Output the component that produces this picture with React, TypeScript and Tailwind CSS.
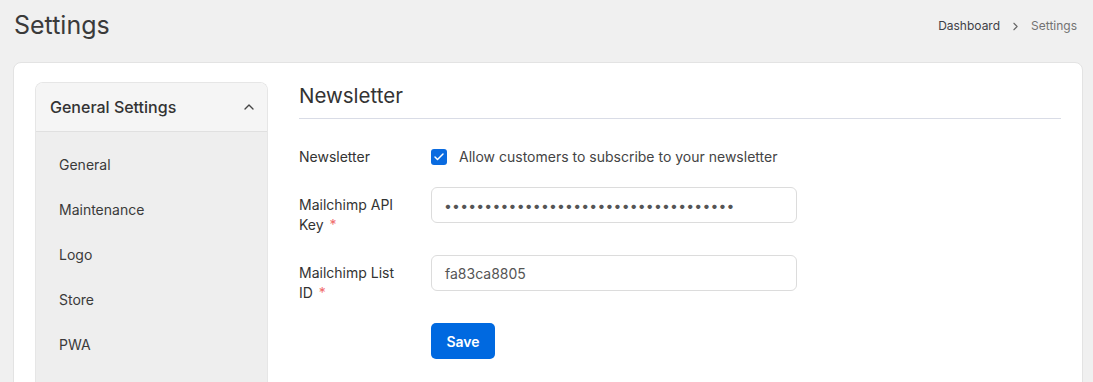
import { ChevronUp, ChevronRight, Check } from 'lucide-react';

const menuItems = ['General', 'Maintenance', 'Logo', 'Store', 'PWA'];

export default function App() {
  return (
    <div className="min-h-screen bg-[#f0f0f0] font-['Inter',sans-serif] text-[#333]">
      {/* Page header */}
      <div className="flex justify-between items-start pl-[14px] pr-[16px] pt-[9px] h-[62px]">
        <h1 className="text-[25px] leading-[32px] text-[#3a3a3a]">Settings</h1>
        <nav className="flex items-center gap-[9px] text-[12px] mt-[8px]">
          <span className="text-[#3f3f46]">Dashboard</span>
          <ChevronRight className="w-[13px] h-[13px] text-[#666]" strokeWidth={2} />
          <span className="text-[#737373]">Settings</span>
        </nav>
      </div>

      {/* Card */}
      <div className="mr-[10px] ml-[13px] bg-white rounded-[8px] border border-[#e3e3e3] pt-[19px] pl-[21px] pr-[21px] pb-6 flex gap-[31px]">
        {/* Sidebar */}
        <div className="w-[233px] shrink-0 rounded-t-[8px] border border-[#e6e6e6] border-b-0 overflow-hidden">
          <div className="h-[49px] bg-[#f5f5f5] border-b border-[#e0e0e0] flex items-center justify-between pl-[14px] pr-[10px]">
            <span className="text-[16px] font-medium text-[#333]">General Settings</span>
            <ChevronUp className="w-[16px] h-[16px] text-[#444]" strokeWidth={2} />
          </div>
          <ul className="bg-[#eeeeee] pt-[10px] pb-[20px]">
            {menuItems.map((item) => (
              <li key={item} className="h-[45px] flex items-center pl-[23px] text-[14px] text-[#3a3a3a]">
                {item}
              </li>
            ))}
          </ul>
        </div>

        {/* Content */}
        <div className="flex-1">
          <h2 className="text-[20.5px] leading-[28px] text-[#333] pb-[8px] border-b border-[#d9dce6]">Newsletter</h2>

          <div className="mt-[28px] flex flex-col gap-[20px]">
            <div className="flex items-center">
              <span className="w-[132px] text-[14px] leading-[20px] text-[#333]">Newsletter</span>
              <label className="flex items-center gap-[12px] text-[14px] leading-[20px] text-[#444]">
                <span className="w-[16px] h-[16px] rounded-[3px] bg-[#0a6be0] flex items-center justify-center">
                  <Check className="w-[12px] h-[12px] text-white" strokeWidth={3} />
                </span>
                Allow customers to subscribe to your newsletter
              </label>
            </div>

            <div className="flex items-start">
              <label className="w-[132px] text-[14px] leading-[20px] text-[#333] pt-[8px] pr-[20px]">
                Mailchimp API Key <span className="ml-[2px] text-[#f06b6b]">*</span>
              </label>
              <div className="w-[366px] h-[36px] rounded-[6px] border border-[#dcdcdc] flex items-center px-[12px] text-[#555] text-[14px] tracking-[0.2px] overflow-hidden">
                ••••••••••••••••••••••••••••••••••••
              </div>
            </div>

            <div className="flex items-start">
              <label className="w-[132px] text-[14px] leading-[20px] text-[#333] pt-[8px] pr-[20px]">
                Mailchimp List ID <span className="ml-[2px] text-[#f06b6b]">*</span>
              </label>
              <div className="w-[366px] h-[36px] rounded-[6px] border border-[#dcdcdc] flex items-center px-[13px] text-[#555] text-[14px]">
                fa83ca8805
              </div>
            </div>

            <div className="pl-[132px]">
              <button className="h-[36px] w-[64px] rounded-[5px] bg-[#0069e0] text-white text-[14px] font-semibold">
                Save
              </button>
            </div>
          </div>
        </div>
      </div>
    </div>
  );
}
